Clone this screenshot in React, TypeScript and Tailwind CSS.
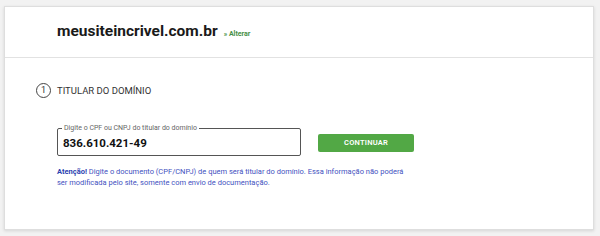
import React from 'react';

export default function App() {
  return (
    <div className="w-[600px] h-[236px] bg-[#f2f2f2] pt-[6px] pl-[4px]" style={{ fontFamily: 'Roboto, "Liberation Sans", sans-serif' }}>
      <div className="w-[590px] h-[224px] bg-white border border-[#dedede] shadow-[0_1px_3px_rgba(0,0,0,0.12)]">
        {/* cabeçalho com o domínio */}
        <div className="h-[51px] border-b border-[#e2e2e2] flex items-center pl-[52px]">
          <span className="text-[15.5px] font-bold text-[#1a1a1a] leading-none">meusiteincrivel.com.br</span>
          <a className="ml-[6px] mt-[5px] text-[7px] font-bold text-[#468f46] leading-none">» Alterar</a>
        </div>

        {/* etapa 1 */}
        <div className="pt-[25px] pl-[31px]">
          <div className="flex items-center gap-[6px]">
            <div className="w-[15px] h-[15px] rounded-full border border-[#444] flex items-center justify-center text-[9px] text-[#333] leading-none">1</div>
            <span className="text-[9.5px] text-[#333] leading-none">TITULAR DO DOMÍNIO</span>
          </div>

          <div className="flex items-center mt-[30px] ml-[21px]">
            <fieldset className="w-[244px] h-[31px] border border-[#555] rounded-[2px] px-[5px] -mt-[3px]">
              <legend className="text-[7px] text-[#666] px-[2px] ml-[-1px] leading-none">Digite o CPF ou CNPJ do titular do domínio</legend>
              <div className="text-[11.5px] font-bold text-[#111] leading-none mt-[6px]">836.610.421-49</div>
            </fieldset>
            <button className="ml-[17px] mt-[2px] w-[96px] h-[18px] bg-[#52a845] rounded-[2px] text-white text-[7.5px] font-semibold tracking-[0.2px]">CONTINUAR</button>
          </div>

          <p className="mt-[10px] ml-[21px] w-[350px] text-[7.5px] leading-[11px] text-[#3f51c0]">
            <b className="text-[#2c3fb0]">Atenção!</b> Digite o documento (CPF/CNPJ) de quem será titular do domínio. Essa informação não poderá ser modificada pelo site, somente com envio de documentação.
          </p>
        </div>
      </div>
    </div>
  );
}
